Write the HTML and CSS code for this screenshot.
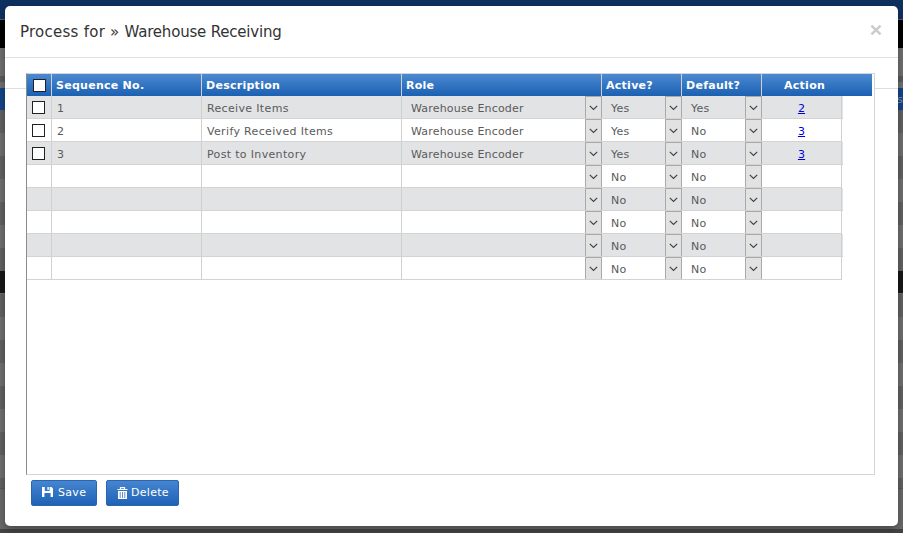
FILE: index.html
```html
<!DOCTYPE html>
<html lang="en">
<head>
<meta charset="utf-8">
<title>Process for » Warehouse Receiving</title>
<link rel="stylesheet" href="styles.css">
</head>
<body>
<svg width="0" height="0" class="defs"><symbol id="chev" viewBox="0 0 9 6"><path d="M.8.8 4.5 4.5 8.2.8" fill="none" stroke="#444" stroke-width="1.2"/></symbol></svg>
<main class="modal">
  <header class="modal-head">
    <h1 class="title"><span class="lead">Process for » </span><span class="subject">Warehouse Receiving</span></h1>
    <svg class="close" width="12" height="12" viewBox="0 0 12 12"><path d="M1.4 1.6 10.6 10.4M10.6 1.6 1.4 10.4" stroke="#ccc" stroke-width="2.5"/></svg>
  </header>
  <section class="modal-body">
    <div class="panel">
      <div class="row head"><div class="check"><i class="box"></i></div><div>Sequence No.</div><div>Description</div><div>Role</div><div>Active?</div><div>Default?</div><div class="action">Action</div></div>
      <div class="row"><div class="check"><i class="box"></i></div><div>1</div><div class="desc">Receive Items</div><div class="sel">Warehouse Encoder<b><svg><use href="#chev"/></svg></b></div><div class="sel">Yes<b><svg><use href="#chev"/></svg></b></div><div class="sel">Yes<b><svg><use href="#chev"/></svg></b></div><div class="action"><a href="#">2</a></div></div>
      <div class="row"><div class="check"><i class="box"></i></div><div>2</div><div class="desc">Verify Received Items</div><div class="sel">Warehouse Encoder<b><svg><use href="#chev"/></svg></b></div><div class="sel">Yes<b><svg><use href="#chev"/></svg></b></div><div class="sel">No<b><svg><use href="#chev"/></svg></b></div><div class="action"><a href="#">3</a></div></div>
      <div class="row"><div class="check"><i class="box"></i></div><div>3</div><div class="desc">Post to Inventory</div><div class="sel">Warehouse Encoder<b><svg><use href="#chev"/></svg></b></div><div class="sel">Yes<b><svg><use href="#chev"/></svg></b></div><div class="sel">No<b><svg><use href="#chev"/></svg></b></div><div class="action"><a href="#">3</a></div></div>
      <div class="row"><div></div><div></div><div></div><div class="sel"><b><svg><use href="#chev"/></svg></b></div><div class="sel">No<b><svg><use href="#chev"/></svg></b></div><div class="sel">No<b><svg><use href="#chev"/></svg></b></div><div></div></div>
      <div class="row"><div></div><div></div><div></div><div class="sel"><b><svg><use href="#chev"/></svg></b></div><div class="sel">No<b><svg><use href="#chev"/></svg></b></div><div class="sel">No<b><svg><use href="#chev"/></svg></b></div><div></div></div>
      <div class="row"><div></div><div></div><div></div><div class="sel"><b><svg><use href="#chev"/></svg></b></div><div class="sel">No<b><svg><use href="#chev"/></svg></b></div><div class="sel">No<b><svg><use href="#chev"/></svg></b></div><div></div></div>
      <div class="row"><div></div><div></div><div></div><div class="sel"><b><svg><use href="#chev"/></svg></b></div><div class="sel">No<b><svg><use href="#chev"/></svg></b></div><div class="sel">No<b><svg><use href="#chev"/></svg></b></div><div></div></div>
      <div class="row"><div></div><div></div><div></div><div class="sel"><b><svg><use href="#chev"/></svg></b></div><div class="sel">No<b><svg><use href="#chev"/></svg></b></div><div class="sel">No<b><svg><use href="#chev"/></svg></b></div><div></div></div>
    </div>
    <div class="buttons">
      <button class="btn save"><svg width="11" height="11" viewBox="0 0 11 11"><path fill="#fff" fill-rule="evenodd" d="M0 0H2.8V4H7.6V0H9.5L11 1.5V10H8.6V6H2.4V10H0ZM5.4 0H6.8V3H5.4Z"/></svg><span>Save</span></button>
      <button class="btn delete"><svg width="11" height="12" viewBox="0 0 11 12"><path d="M3.5 2V.6h4V2M.5 2.5h10" fill="none" stroke="#fff" stroke-width="1.2"/><path d="M1 4h9v8H1Z" fill="#fff"/><path d="M3.2 5v6M5.5 5v6M7.8 5v6" stroke="#3470bd" stroke-width=".8"/></svg><span>Delete</span></button>
    </div>
  </section>
</main>
<span class="behind">s</span>
</body>
</html>
```

FILE: styles.css
```css
* { box-sizing: border-box; }
body {
  margin: 0;
  height: 533px;
  padding: 6px 5px 7px;
  overflow: hidden;
  font: 11px/22px Verdana, "DejaVu Sans", sans-serif;
  color: #5a5a5a;
  background:
    linear-gradient(#0f3160 0 19px, #4f6177 19px 20px, #000 20px 48px, #707070 48px 76px, #5c5c5c 76px 82px, #707070 82px 88px, #14458a 88px 110px, transparent 110px 271px, #181818 271px 293px, transparent 293px 488px, #585858 488px 489px, #6a6a6a 489px 529px, #444 529px),
    repeating-linear-gradient(#707070 0 18px, #626262 18px 41px, #707070 41px 46px);
}
.defs { position: absolute; }
.behind { position: absolute; left: 897px; top: 89px; color: #7d93b5; z-index: 0; }
.modal {
  position: relative;
  z-index: 1;
  height: 520px;
  background: #fff;
  border-radius: 5px;
  box-shadow: 0 3px 9px rgba(0, 0, 0, .35);
}
.modal-head {
  display: flex;
  justify-content: space-between;
  height: 52px;
  padding: 15px 16px 0 15px;
  border-bottom: 1px solid #e0e0e0;
}
.title { margin: 0; font-size: 15px; line-height: 22px; font-weight: 400; color: #333; white-space: nowrap; }
.lead { letter-spacing: .25px; }
.subject { letter-spacing: -.2px; }
.close { margin-top: 3px; }
.modal-body {
  height: 468px;
  padding: 15px 23px 0 21px;
  background: linear-gradient(#dcdfe2, #dcdfe2) 0 30px / 100% 1px no-repeat;
}
.panel {
  height: 402px;
  border: 1px solid #d3d6d9;
  border-left-color: #8c8c8c;
  background: #fff;
}
.row {
  display: grid;
  grid-template-columns: 25px 150px 200px 200px 80px 80px 80px;
  width: 815px;
  height: 23px;
  line-height: 26px;
  letter-spacing: .18px;
  border-bottom: 1px solid #d3d3d3;
}
.row > div {
  display: flex;
  align-items: flex-start;
  height: 22px;
  padding-left: 5px;
  border-right: 1px solid #d0d0d0;
  white-space: nowrap;
}
.row:nth-child(even) { background: #e2e3e5; width: 816px; }
.row .desc { letter-spacing: .34px; }
.row .action { justify-content: center; padding: 0; }
.row .check { padding: 5px 0 0 5px; }
.row .sel { justify-content: space-between; padding-left: 9px; border-right-color: #a9a9a9; }
.sel b {
  display: flex;
  align-items: center;
  justify-content: center;
  width: 16px;
  height: 22px;
  margin-left: auto;
  padding: 1px 1px 0 0;
  background: #e2e2e2;
  border-left: 1px solid #a9a9a9;
  border-top: 1px solid #a9a9a9;
}
.sel svg { width: 9px; height: 6px; }
.row.head {
  grid-template-columns: 25px 150px 200px 200px 80px 80px 1fr;
  width: 845px;
  height: 22px;
  border: 0;
  color: #fff;
  font-weight: 700;
  line-height: 24px;
  letter-spacing: .27px;
  background: linear-gradient(#4b8ad2, #1c60b2);
}
.row.head > div { padding-left: 4px; }
.row.head > .check { padding: 5px 0 0 6px; }
.row.head > .action { justify-content: flex-start; padding-left: 22px; border: 0; }
.box { width: 13px; height: 13px; border: 1px solid #222; background: #fff; }
a { color: #0000e0; text-decoration: underline; }
.buttons { display: flex; gap: 9px; padding: 5px 0 0 5px; }
.btn {
  display: flex;
  align-items: center;
  height: 26px;
  padding: 0 0 1px 10px;
  border: 1px solid #2866b0;
  border-radius: 2px;
  background: linear-gradient(#4585d0, #1f62b5);
  color: #fff;
  font: 11px/20px Verdana, "DejaVu Sans", sans-serif;
  letter-spacing: .3px;
}
.btn span { padding-top: 1px; }
.save { width: 66px; gap: 5px; }
.delete { width: 73px; gap: 3px; }
```
